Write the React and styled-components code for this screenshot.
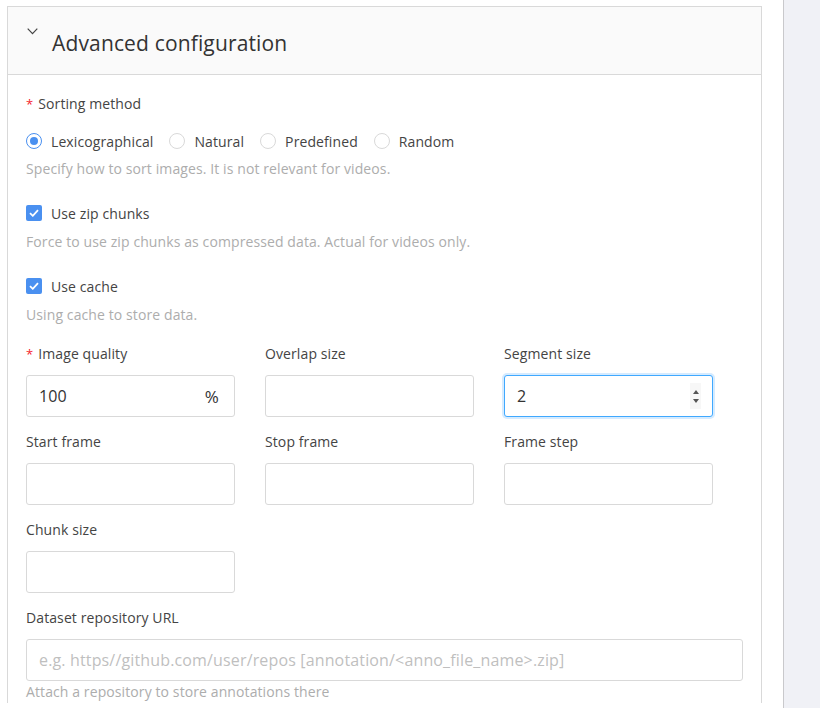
import React from "react";
import styled, { createGlobalStyle } from "styled-components";

const Global = createGlobalStyle`
  html, body { margin: 0; padding: 0; background: #fff; }
  body { font-family: "Open Sans", "Liberation Sans", sans-serif; font-size: 14px; color: #444; letter-spacing: 0.1px; }
  * { box-sizing: border-box; }
`;

const Page = styled.div`
  display: flex;
  height: 708px;
  overflow: hidden;
`;

const Main = styled.div`
  width: 783px;
  flex: none;
  padding: 6px 21px 0 7px;
`;

const Sidebar = styled.div`
  flex: 1;
  background: #f0f1f6;
  border-left: 1px solid #c9c9cc;
`;

const Panel = styled.section`
  border: 1px solid #d9d9d9;
  border-bottom: none;
  background: #fff;
`;

const Header = styled.div`
  height: 68px;
  background: #fafafa;
  border-bottom: 1px solid #d9d9d9;
  display: flex;
  align-items: center;
  padding: 4px 0 0 19px;
  gap: 14px;
`;

const Chevron = styled.svg`
  width: 11px;
  height: 7px;
  margin-top: -22px;
  flex: none;
`;

const Title = styled.h2`
  margin: 0;
  font-size: 21px;
  font-weight: 400;
  color: #333;
  line-height: 28px;
  letter-spacing: 0.15px;
`;

const Body = styled.div`
  padding: 18px 18px 0 18px;
  display: flex;
  flex-direction: column;
`;

const Block = styled.div`
  display: flex;
  flex-direction: column;
  margin-bottom: ${(p) => p.$mb ?? 17}px;
`;

const Label = styled.div`
  line-height: 22px;
  height: 22px;
  color: #444;
  margin-bottom: ${(p) => p.$mb ?? 10}px;
  white-space: nowrap;
`;

const Star = styled.span`
  color: #f5222d;
  margin-right: 5px;
  font-size: 13px;
`;

const Help = styled.div`
  line-height: 22px;
  color: #adadad;
  margin-top: ${(p) => p.$mt ?? 0}px;
  white-space: nowrap;
`;

const RadioGroup = styled.div`
  display: flex;
  align-items: center;
  height: 32px;
`;

const RadioItem = styled.label`
  display: flex;
  align-items: center;
  margin-right: 8px;
  color: #444;
`;

const RadioCircle = styled.span`
  width: 16px;
  height: 16px;
  border-radius: 50%;
  border: 1px solid ${(p) => (p.$on ? "#4a90f0" : "#d9d9d9")};
  display: flex;
  align-items: center;
  justify-content: center;
  flex: none;
  &::after {
    content: "";
    width: 8px;
    height: 8px;
    border-radius: 50%;
    background: #4a90f0;
    display: ${(p) => (p.$on ? "block" : "none")};
  }
`;

const ItemText = styled.span`
  padding: 0 8px 0 9px;
`;

const CheckRow = styled.label`
  display: flex;
  align-items: center;
  height: 32px;
  color: #444;
`;

const CheckBox = styled.span`
  width: 16px;
  height: 16px;
  border-radius: 2px;
  background: #4a90f0;
  display: flex;
  align-items: center;
  justify-content: center;
  flex: none;
`;

const Grid = styled.div`
  display: grid;
  grid-template-columns: repeat(3, 209px);
  column-gap: 30px;
  row-gap: 14px;
  margin-bottom: 14px;
`;

const Field = styled.div`
  display: flex;
  flex-direction: column;
`;

const InputBox = styled.div`
  position: relative;
  height: 42px;
  width: ${(p) => p.$w || "100%"};
  border: 1px solid ${(p) => (p.$focus ? "#40a9ff" : "#d9d9d9")};
  box-shadow: ${(p) => (p.$focus ? "0 0 0 2px rgba(24,144,255,0.18)" : "none")};
  border-radius: 3px;
  background: #fff;
  display: flex;
  align-items: center;
  padding: 0 15px 0 12px;
  font-size: 16px;
  color: #333;
  letter-spacing: 0.15px;
`;

const Value = styled.span`
  flex: 1;
`;

const Placeholder = styled.span`
  flex: 1;
  color: #bfbfbf;
  white-space: nowrap;
`;

const Suffix = styled.span`
  font-size: 17px;
  color: #333;
`;

const Spinner = styled.div`
  position: absolute;
  right: 11px;
  top: 7px;
  width: 11px;
  height: 26px;
  background: #f7f7f7;
  display: flex;
  flex-direction: column;
  align-items: center;
  justify-content: center;
  gap: 5px;
`;

const Radio = ({ on, children }) => (
  <RadioItem>
    <RadioCircle $on={on} />
    <ItemText>{children}</ItemText>
  </RadioItem>
);

const Check = ({ children }) => (
  <CheckRow>
    <CheckBox>
      <svg width="10" height="8" viewBox="0 0 10 8">
        <path d="M1 4.2 L3.8 6.8 L9 1.2" fill="none" stroke="#fff" strokeWidth="1.8" />
      </svg>
    </CheckBox>
    <ItemText>{children}</ItemText>
  </CheckRow>
);

const Input = ({ label, required, value, suffix, focus }) => (
  <Field>
    <Label>
      {required && <Star>*</Star>}
      {label}
    </Label>
    <InputBox $focus={focus}>
      <Value>{value}</Value>
      {suffix && <Suffix>{suffix}</Suffix>}
      {focus && (
        <Spinner>
          <svg width="6" height="4" viewBox="0 0 6 4"><path d="M0 4 L3 0 L6 4Z" fill="#555" /></svg>
          <svg width="6" height="4" viewBox="0 0 6 4"><path d="M0 0 L3 4 L6 0Z" fill="#555" /></svg>
        </Spinner>
      )}
    </InputBox>
  </Field>
);

export default function App() {
  return (
    <>
      <Global />
      <Page>
        <Main>
          <Panel>
            <Header>
              <Chevron viewBox="0 0 11 7">
                <path d="M0.7 0.7 L5.5 5.6 L10.3 0.7" fill="none" stroke="#444" strokeWidth="1.2" />
              </Chevron>
              <Title>Advanced configuration</Title>
            </Header>
            <Body>
              <Block>
                <Label $mb={10}>
                  <Star>*</Star>Sorting method
                </Label>
                <RadioGroup>
                  <Radio on>Lexicographical</Radio>
                  <Radio>Natural</Radio>
                  <Radio>Predefined</Radio>
                  <Radio>Random</Radio>
                </RadioGroup>
                <Help $mt={1}>Specify how to sort images. It is not relevant for videos.</Help>
              </Block>
              <Block>
                <Check>Use zip chunks</Check>
                <Help $mt={2}>Force to use zip chunks as compressed data. Actual for videos only.</Help>
              </Block>
              <Block>
                <Check>Use cache</Check>
                <Help $mt={2}>Using cache to store data.</Help>
              </Block>
              <Grid>
                <Input label="Image quality" required value="100" suffix="%" />
                <Input label="Overlap size" />
                <Input label="Segment size" value="2" focus />
                <Input label="Start frame" />
                <Input label="Stop frame" />
                <Input label="Frame step" />
                <Input label="Chunk size" />
              </Grid>
              <Field>
                <Label>Dataset repository URL</Label>
                <InputBox>
                  <Placeholder>e.g. https//github.com/user/repos [annotation/&lt;anno_file_name&gt;.zip]</Placeholder>
                </InputBox>
                <Help>Attach a repository to store annotations there</Help>
              </Field>
            </Body>
          </Panel>
        </Main>
        <Sidebar />
      </Page>
    </>
  );
}
